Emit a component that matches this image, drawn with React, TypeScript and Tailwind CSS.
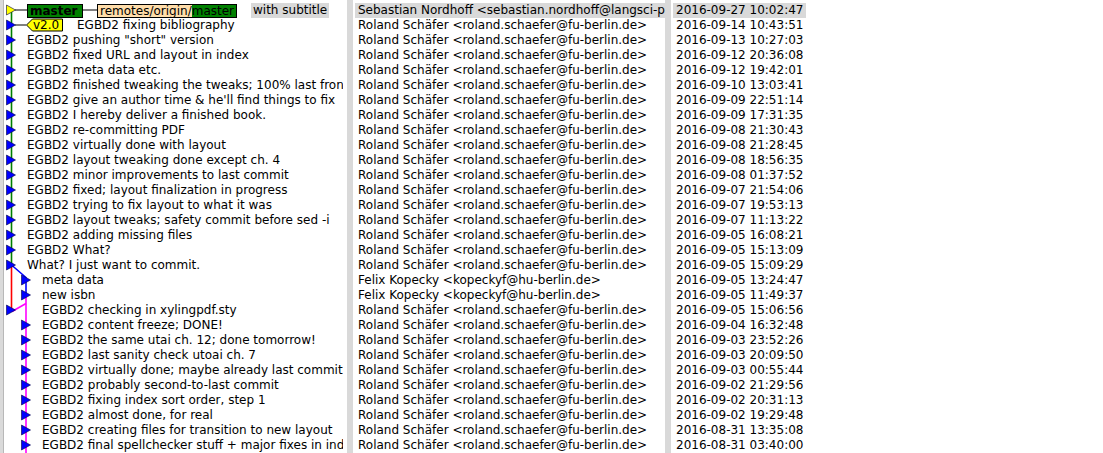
import React from "react";

type Row = { head: string; author: string; date: string; col: number };

const RS = "Roland Schäfer <roland.schaefer@fu-berlin.de>";
const FK = "Felix Kopecky <kopeckyf@hu-berlin.de>";

const rows: Row[] = [
  { head: "with subtitle", author: "Sebastian Nordhoff <sebastian.nordhoff@langsci-press.org>", date: "2016-09-27 10:02:47", col: 0 },
  { head: "EGBD2 fixing bibliography", author: RS, date: "2016-09-14 10:43:51", col: 0 },
  { head: 'EGBD2 pushing "short" version', author: RS, date: "2016-09-13 10:27:03", col: 0 },
  { head: "EGBD2 fixed URL and layout in index", author: RS, date: "2016-09-12 20:36:08", col: 0 },
  { head: "EGBD2 meta data etc.", author: RS, date: "2016-09-12 19:42:01", col: 0 },
  { head: "EGBD2 finished tweaking the tweaks; 100% last front", author: RS, date: "2016-09-10 13:03:41", col: 0 },
  { head: "EGBD2 give an author time & he'll find things to fix", author: RS, date: "2016-09-09 22:51:14", col: 0 },
  { head: "EGBD2 I hereby deliver a finished book.", author: RS, date: "2016-09-09 17:31:35", col: 0 },
  { head: "EGBD2 re-committing PDF", author: RS, date: "2016-09-08 21:30:43", col: 0 },
  { head: "EGBD2 virtually done with layout", author: RS, date: "2016-09-08 21:28:45", col: 0 },
  { head: "EGBD2 layout tweaking done except ch. 4", author: RS, date: "2016-09-08 18:56:35", col: 0 },
  { head: "EGBD2 minor improvements to last commit", author: RS, date: "2016-09-08 01:37:52", col: 0 },
  { head: "EGBD2 fixed; layout finalization in progress", author: RS, date: "2016-09-07 21:54:06", col: 0 },
  { head: "EGBD2 trying to fix layout to what it was", author: RS, date: "2016-09-07 19:53:13", col: 0 },
  { head: "EGBD2 layout tweaks; safety commit before sed -i", author: RS, date: "2016-09-07 11:13:22", col: 0 },
  { head: "EGBD2 adding missing files", author: RS, date: "2016-09-05 16:08:21", col: 0 },
  { head: "EGBD2 What?", author: RS, date: "2016-09-05 15:13:09", col: 0 },
  { head: "What? I just want to commit.", author: RS, date: "2016-09-05 15:09:29", col: 0 },
  { head: "meta data", author: FK, date: "2016-09-05 13:24:47", col: 1 },
  { head: "new isbn", author: FK, date: "2016-09-05 11:49:37", col: 1 },
  { head: "EGBD2 checking in xylingpdf.sty", author: RS, date: "2016-09-05 15:06:56", col: 1 },
  { head: "EGBD2 content freeze; DONE!", author: RS, date: "2016-09-04 16:32:48", col: 1 },
  { head: "EGBD2 the same utai ch. 12; done tomorrow!", author: RS, date: "2016-09-03 23:52:26", col: 1 },
  { head: "EGBD2 last sanity check utoai ch. 7", author: RS, date: "2016-09-03 20:09:50", col: 1 },
  { head: "EGBD2 virtually done; maybe already last commit", author: RS, date: "2016-09-03 00:55:44", col: 1 },
  { head: "EGBD2 probably second-to-last commit", author: RS, date: "2016-09-02 21:29:56", col: 1 },
  { head: "EGBD2 fixing index sort order, step 1", author: RS, date: "2016-09-02 20:31:13", col: 1 },
  { head: "EGBD2 almost done, for real", author: RS, date: "2016-09-02 19:29:48", col: 1 },
  { head: "EGBD2 creating files for transition to new layout", author: RS, date: "2016-08-31 13:35:08", col: 1 },
  { head: "EGBD2 final spellchecker stuff + major fixes in index", author: RS, date: "2016-08-31 03:40:00", col: 1 },
];

// commit dot column per row
const dotCol = (i: number) => (i === 18 || i === 19 || i >= 21 ? 1 : 0);
const cy = (i: number) => 10 + 15 * i;

function Graph() {
  return (
    <svg
      className="pointer-events-none absolute left-0 top-0"
      width={343}
      height={453}
      viewBox="4 0 343 453"
    >
      {/* lines */}
      <line x1={11.5} y1={cy(0)} x2={11.5} y2={cy(17)} stroke="#008000" strokeWidth={1.6} />
      <line x1={11.5} y1={cy(17)} x2={11.5} y2={cy(20)} stroke="#ff0000" strokeWidth={1.6} />
      <polyline points={`11.5,${cy(17)} 26,${cy(17) + 12.5} 26,${cy(19)}`} fill="none" stroke="#0000ff" strokeWidth={1.6} />
      <line x1={26} y1={cy(19)} x2={26} y2={460} stroke="#ff00ff" strokeWidth={1.6} />
      <line x1={12} y1={cy(20) + 1.5} x2={26} y2={cy(20) - 6.5} stroke="#ff00ff" strokeWidth={1.6} />
      {/* tag connectors */}
      <line x1={15} y1={cy(0)} x2={27} y2={cy(0)} stroke="#000" strokeWidth={1} />
      <line x1={83} y1={cy(0)} x2={97} y2={cy(0)} stroke="#000" strokeWidth={1} />
      <line x1={15} y1={cy(1)} x2={26} y2={cy(1)} stroke="#000" strokeWidth={1} />
      {/* v2.0 tag shape */}
      <polygon
        points={`26.5,${cy(1)} 32.5,${cy(1) - 6} 62.5,${cy(1) - 6} 62.5,${cy(1) + 6} 32.5,${cy(1) + 6}`}
        fill="#ffff00"
        stroke="#000"
        strokeWidth={1}
      />
      {/* commit markers */}
      {rows.map((_, i) => {
        const x = 6.5 + 15 * dotCol(i);
        const c = cy(i);
        return (
          <polygon
            key={i}
            points={`${x},${c - 5} ${x + 9},${c} ${x},${c + 5}`}
            fill={i === 0 ? "#ffff00" : "#0000ff"}
            stroke="#000040"
            strokeWidth={0.6}
          />
        );
      })}
    </svg>
  );
}

export default function App() {
  return (
    <div className="flex h-[453px] w-[1103px] overflow-hidden bg-white font-['DejaVu_Sans',sans-serif] text-[12px] leading-[15px] text-black">
      <div className="w-[4px] shrink-0 border-r border-[#b8b8b8] bg-[#dadada]" />
      {/* headline / graph column */}
      <div className="relative w-[343px] shrink-0 overflow-hidden pt-[3px]">
        <Graph />
        <div className="relative w-[339px] overflow-hidden">
          {rows.map((r, i) => {
            if (i === 0) {
              return (
                <div key={i} className="flex h-[15px] items-center whitespace-nowrap pl-[23px]">
                  <span className="flex h-[14px] w-[56px] items-center border border-black bg-[#008000] pl-[2px] font-bold leading-[12px]">
                    master
                  </span>
                  <span className="ml-[14px] flex h-[14px] items-center border border-black leading-[12px]">
                    <span className="flex h-full items-center bg-[#ffddaa] pl-[2px]">remotes/origin/</span>
                    <span className="flex h-full items-center bg-[#008000] pr-[2px]">master</span>
                  </span>
                  <span className="ml-[14px] bg-[#d9d9d9] px-[2px]">{r.head}</span>
                </div>
              );
            }
            if (i === 1) {
              return (
                <div key={i} className="flex h-[15px] items-center whitespace-nowrap pl-[29px]">
                  <span className="w-[44px]">v2.0</span>
                  <span>{r.head}</span>
                </div>
              );
            }
            return (
              <div
                key={i}
                className={
                  r.col === 1
                    ? "h-[15px] whitespace-nowrap pl-[38px]"
                    : "h-[15px] whitespace-nowrap pl-[23px]"
                }
              >
                {r.head}
              </div>
            );
          })}
        </div>
      </div>
      <div className="w-[6px] shrink-0 bg-[#d9d9d9]" />
      {/* author column */}
      <div className="w-[312px] shrink-0 overflow-hidden pt-[3px]">
        {rows.map((r, i) => (
          <div key={i} className="h-[15px] whitespace-nowrap pl-[2px]">
            <span className={i === 0 ? "inline-block h-[15px] bg-[#d9d9d9] px-[3px]" : "inline-block h-[15px] px-[3px]"}>
              {r.author}
            </span>
          </div>
        ))}
      </div>
      <div className="w-[6px] shrink-0 bg-[#d9d9d9]" />
      {/* date column */}
      <div className="flex-1 overflow-hidden pt-[3px]">
        {rows.map((r, i) => (
          <div key={i} className="h-[15px] whitespace-nowrap pl-[2px]">
            <span className={i === 0 ? "inline-block h-[15px] bg-[#d9d9d9] px-[3px]" : "inline-block h-[15px] px-[3px]"}>
              {r.date}
            </span>
          </div>
        ))}
      </div>
    </div>
  );
}
